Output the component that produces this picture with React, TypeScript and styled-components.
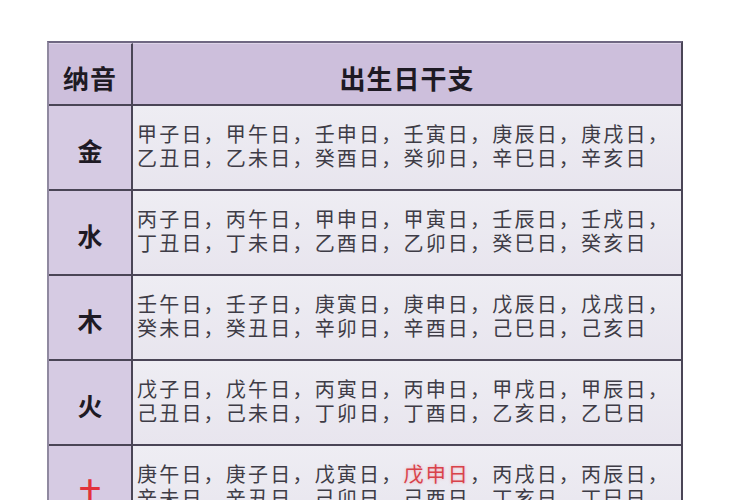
import React from "react";
import styled, { createGlobalStyle } from "styled-components";

const Global = createGlobalStyle`
  html, body { margin: 0; padding: 0; background: #ffffff; }
  body { font-family: "Noto Sans CJK SC", "Noto Sans", sans-serif; overflow: hidden; }
`;

const Page = styled.div`
  width: 750px;
  height: 500px;
  overflow: hidden;
  padding: 41px 0 0 47px;
  box-sizing: border-box;
`;

const Table = styled.div`
  width: 636px;
  box-sizing: border-box;
  display: grid;
  grid-template-columns: 84px 548px;
  border-top: 2px solid #6f6782;
  border-left: 2px solid #9089a0;
  border-right: 2px solid #4a4556;
`;

const HeadCell = styled.div<{ $left?: boolean }>`
  height: 63px;
  box-sizing: border-box;
  background: #cdbfdc;
  border-top: 1px solid #ddd3e8;
  border-bottom: 2px solid #4a4556;
  ${(p) => (p.$left ? "border-right: 2px solid #4a4556;" : "")}
  display: flex;
  align-items: center;
  justify-content: center;
  padding-top: 6px;
  font-size: 26px;
  font-weight: 700;
  color: #1e1a24;
  letter-spacing: 1px;
`;

const Label = styled.div<{ $red?: boolean }>`
  height: 85px;
  box-sizing: border-box;
  background: #d6cbe3;
  border-right: 2px solid #4a4556;
  border-bottom: 2px solid #4a4556;
  display: flex;
  align-items: center;
  justify-content: center;
  padding-top: 4px;
  font-size: 25px;
  font-weight: 700;
  color: ${(p) => (p.$red ? "#e2323c" : "#1e1a24")};
`;

const Data = styled.div`
  height: 85px;
  box-sizing: border-box;
  background: linear-gradient(#eeedf3, #e8e5ee);
  border-bottom: 2px solid #4a4556;
  display: flex;
  flex-direction: column;
  justify-content: center;
  padding: 0 0 4px 4px;
`;

const Line = styled.div`
  font-size: 20px;
  line-height: 24px;
  letter-spacing: 2.2px;
  color: #3e3c46;
  white-space: nowrap;
`;

const Hi = styled.span`
  color: #d8424a;
  text-shadow: 0 0 3px rgba(240, 150, 160, 0.7);
`;

type Row = { label: string; red?: boolean; lines: string[][] };

const rows: Row[] = [
  {
    label: "金",
    lines: [
      ["甲子日", "甲午日", "壬申日", "壬寅日", "庚辰日", "庚戌日"],
      ["乙丑日", "乙未日", "癸酉日", "癸卯日", "辛巳日", "辛亥日"],
    ],
  },
  {
    label: "水",
    lines: [
      ["丙子日", "丙午日", "甲申日", "甲寅日", "壬辰日", "壬戌日"],
      ["丁丑日", "丁未日", "乙酉日", "乙卯日", "癸巳日", "癸亥日"],
    ],
  },
  {
    label: "木",
    lines: [
      ["壬午日", "壬子日", "庚寅日", "庚申日", "戊辰日", "戊戌日"],
      ["癸未日", "癸丑日", "辛卯日", "辛酉日", "己巳日", "己亥日"],
    ],
  },
  {
    label: "火",
    lines: [
      ["戊子日", "戊午日", "丙寅日", "丙申日", "甲戌日", "甲辰日"],
      ["己丑日", "己未日", "丁卯日", "丁酉日", "乙亥日", "乙巳日"],
    ],
  },
  {
    label: "土",
    red: true,
    lines: [
      ["庚午日", "庚子日", "戊寅日", "*戊申日", "丙戌日", "丙辰日"],
      ["辛未日", "辛丑日", "己卯日", "己酉日", "丁亥日", "丁巳日"],
    ],
  },
];

function renderLine(items: string[], last: boolean) {
  return items.map((it, i) => {
    const sep = i < items.length - 1 || !last ? "，" : "";
    if (it.startsWith("*")) {
      return (
        <React.Fragment key={i}>
          <Hi>{it.slice(1)}</Hi>
          {sep}
        </React.Fragment>
      );
    }
    return <React.Fragment key={i}>{it + sep}</React.Fragment>;
  });
}

export default function App() {
  return (
    <>
      <Global />
      <Page>
        <Table>
          <HeadCell $left>纳音</HeadCell>
          <HeadCell>出生日干支</HeadCell>
          {rows.map((r) => (
            <React.Fragment key={r.label}>
              <Label $red={r.red}>{r.label}</Label>
              <Data>
                {r.lines.map((l, i) => (
                  <Line key={i}>{renderLine(l, i === r.lines.length - 1)}</Line>
                ))}
              </Data>
            </React.Fragment>
          ))}
        </Table>
      </Page>
    </>
  );
}
